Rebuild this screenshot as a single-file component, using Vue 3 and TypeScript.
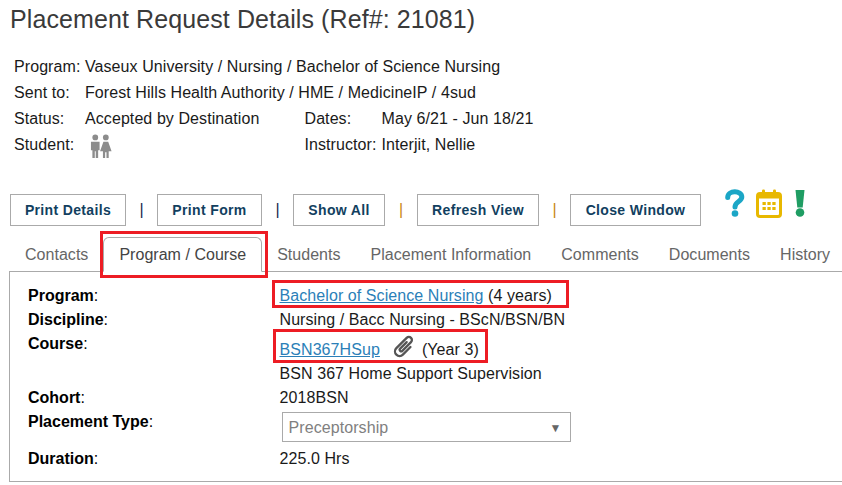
<script setup lang="ts">
const info = [
  { label: 'Program:', value: 'Vaseux University / Nursing / Bachelor of Science Nursing' },
  { label: 'Sent to:', value: 'Forest Hills Health Authority / HME / MedicineIP / 4sud' },
]
const buttons = [
  { label: 'Print Details', width: 116 },
  { label: 'Print Form', width: 105 },
  { label: 'Show All', width: 92 },
  { label: 'Refresh View', width: 122 },
  { label: 'Close Window', width: 131 },
]
const tabs = ['Contacts', 'Program / Course', 'Students', 'Placement Information', 'Comments', 'Documents', 'History']
</script>

<template>
  <div class="page">
    <h1 class="title">Placement Request Details (Ref#: 21081)</h1>

    <div class="info">
      <div v-for="row in info" :key="row.label" class="info-row">
        <span class="info-label">{{ row.label }}</span><span>{{ row.value }}</span>
      </div>
      <div class="info-row">
        <span class="info-label">Status:</span><span class="info-mid">Accepted by Destination</span>
        <span class="info-label2">Dates:</span><span>May 6/21 - Jun 18/21</span>
      </div>
      <div class="info-row">
        <span class="info-label">Student:</span>
        <span class="info-mid">
          <svg class="people" width="23" height="25" viewBox="0 0 24 25" fill="#8c8c8c">
            <circle cx="5.5" cy="3" r="3" />
            <path d="M1 7.500h9v9h-1.500v8H6v-7H5v7H2.500v-8H1z" />
            <circle cx="16.500" cy="3" r="3" />
            <path d="M14 7.500h5l3.500 10H19.500v7H17.200v-6h-1.400v6h-2.300v-7H10.500z" />
          </svg>
        </span>
        <span class="info-label2">Instructor:</span><span>Interjit, Nellie</span>
      </div>
    </div>

    <div class="toolbar">
      <template v-for="(b, i) in buttons" :key="b.label">
        <button class="btn" type="button" :style="{ width: b.width + 'px' }">{{ b.label }}</button>
        <span v-if="i < buttons.length - 1" class="sep" :class="{ amber: i >= 2, wide: i === 2 }">|</span>
      </template>
      <div class="tool-icons">
        <svg class="q" width="20" height="28" viewBox="0 0 20 28" fill="none">
          <path d="M2.700 8.500C2.700 1 16.800 1 16.800 8C16.800 12.500 10 12.500 10 18" stroke="#1ba6c6" stroke-width="5" stroke-linecap="round" />
          <circle cx="10" cy="24.500" r="3.300" fill="#1ba6c6" />
        </svg>
        <svg class="cal" width="26" height="29" viewBox="0 0 26 29">
          <rect x="1.500" y="4.500" width="23" height="23" rx="2.500" fill="#fff" stroke="#e8b800" stroke-width="3" />
          <rect x="1.500" y="4.500" width="23" height="5" fill="#e8b800" />
          <rect x="6" y="0.500" width="3" height="6" rx="1.200" fill="#e8b800" />
          <rect x="17" y="0.500" width="3" height="6" rx="1.200" fill="#e8b800" />
          <g fill="#e8b800">
            <rect x="6.500" y="13" width="3.300" height="3" />
            <rect x="11.400" y="13" width="3.300" height="3" />
            <rect x="16.300" y="13" width="3.300" height="3" />
            <rect x="6.500" y="18" width="3.300" height="3" />
            <rect x="11.400" y="18" width="3.300" height="3" />
            <rect x="16.300" y="18" width="3.300" height="3" />
          </g>
        </svg>
        <svg class="ex" width="10" height="28" viewBox="0 0 10 28">
          <path d="M0.500 1h9l-1.800 17.500H2.300z" fill="#1f9d63" />
          <circle cx="5" cy="23.500" r="4.300" fill="#1f9d63" />
        </svg>
      </div>
    </div>

    <div class="tabs">
      <span v-for="(t, i) in tabs" :key="t" class="tab" :class="{ active: i === 1 }">{{ t }}</span>
    </div>

    <div class="panel">
      <div class="row h24"><b class="k">Program<span>:</span></b><span><a href="#">Bachelor of Science Nursing</a> (4 years)</span></div>
      <div class="row h24"><b class="k">Discipline<span>:</span></b><span>Nursing / Bacc Nursing - BScN/BSN/BN</span></div>
      <div class="row course">
        <b class="k">Course<span>:</span></b>
        <span class="course-val">
          <a href="#">BSN367HSup</a>
          <svg class="clip" width="23" height="23" viewBox="-1 0 30 30" fill="none" stroke="#555" stroke-width="3" stroke-linecap="round">
            <path transform="rotate(45 14 15)" d="M12 9V21a2 2 0 0 0 4 0V5a4 4 0 0 0-8 0V24a6 6 0 0 0 12 0V10" />
          </svg>
          <span>(Year 3)</span>
        </span>
      </div>
      <div class="row h24 indent"><span>BSN 367 Home Support Supervision</span></div>
      <div class="row h24"><b class="k">Cohort<span>:</span></b><span>2018BSN</span></div>
      <div class="row ptype">
        <b class="k">Placement Type<span>:</span></b>
        <div class="select"><span>Preceptorship</span><i class="caret">▼</i></div>
      </div>
      <div class="row h24"><b class="k">Duration<span>:</span></b><span>225.0 Hrs</span></div>
    </div>

    <div class="mark m1"></div>
    <div class="mark m2"></div>
    <div class="mark m3"></div>
  </div>
</template>

<style>
html, body { margin: 0; background: #fff; }
</style>

<style scoped>
.page {
  position: relative;
  width: 842px;
  height: 485px;
  overflow: hidden;
  font-family: "Liberation Sans", Arial, sans-serif;
  font-size: 16px;
  letter-spacing: 0.08px;
  color: #1a1a1a;
  background: #fff;
}
.title {
  margin: 0;
  padding: 4px 0 0 10px;
  height: 36px;
  font-size: 25px;
  line-height: 30px;
  font-weight: 400;
  letter-spacing: 0.1px;
  color: #3a3a3a;
  box-sizing: content-box;
}
.info { padding: 14px 0 0 14px; box-sizing: border-box; height: 120px; }
.info-row { display: flex; height: 26px; line-height: 26px; }
.info-label { width: 71px; flex: none; }
.info-mid { width: 219.500px; flex: none; }
.info-label2 { width: 77px; flex: none; }
.people { display: block; margin: 2px 0 0 5px; }
.toolbar { display: flex; align-items: center; height: 32px; margin-top: 34px; padding-left: 10px; }
.btn {
  box-sizing: border-box;
  height: 32px;
  padding: 0;
  border: 1px solid #aaa;
  background: #fff;
  font-family: inherit;
  font-size: 14px;
  font-weight: 700;
  letter-spacing: 0.35px;
  color: #123f5f;
  white-space: nowrap;
}
.sep { width: 31px; text-align: center; color: #1a2a4a; font-size: 16px; }
.sep.wide { width: 32px; }
.sep.amber { color: #c8860f; }
.tool-icons { display: flex; align-items: flex-start; height: 32px; margin-left: 24px; margin-top: -9px; }
.tool-icons .q { margin-top: -1px; }
.tool-icons .cal { margin-left: 11px; margin-top: -1px; }
.tool-icons .ex { margin-left: 13px; margin-top: -1px; }
.tabs { display: flex; align-items: flex-end; height: 35px; margin: 10px 0 0 10px; letter-spacing: 0.03px; }
.tab { padding: 0 15px; line-height: 32px; color: #666; white-space: nowrap; }
.tab.active {
  box-sizing: border-box;
  height: 35px;
  margin-bottom: -1px;
  padding-top: 1px;
  border: 1px solid #aaa;
  border-bottom: 1px solid #fff;
  border-radius: 6px 6px 0 0;
  color: #444;
  position: relative;
  z-index: 1;
}
.panel {
  box-sizing: border-box;
  margin-left: 9px;
  height: 211px;
  border: 1px solid #aaa;
  border-right: 0;
  padding: 12px 0 0 18px;
}
.row { display: flex; }
.h24 { height: 24px; line-height: 24px; }
.k { width: 251.500px; flex: none; color: #000; letter-spacing: 0; }
.k span { font-weight: 400; }
a { color: #2b7fb8; }
.course { height: 30px; line-height: 24px; }
.course-val { display: flex; align-items: flex-start; }
.course-val a { margin-top: 6px; }
.course-val span { margin-top: 6px; margin-left: 6px; }
.clip { margin: 3px 0 0 13px; }
.indent { padding-left: 251.500px; }
.ptype { height: 37px; line-height: 24px; }
.select {
  box-sizing: border-box;
  width: 289px;
  height: 30px;
  margin: 2px 0 0 2px;
  border: 1px solid #aaa;
  padding: 1px 0 0 6px;
  display: flex;
  align-items: center;
  justify-content: space-between;
  color: #808080;
}
.caret { font-style: normal; font-size: 12px; color: #666; margin-right: 8px; }
.mark { position: absolute; border: 3px solid #ed1c24; box-sizing: border-box; pointer-events: none; }
.m1 { left: 100px; top: 231px; width: 168px; height: 47px; }
.m2 { left: 272px; top: 280px; width: 297px; height: 28px; }
.m3 { left: 273px; top: 329px; width: 215px; height: 34px; }
</style>
